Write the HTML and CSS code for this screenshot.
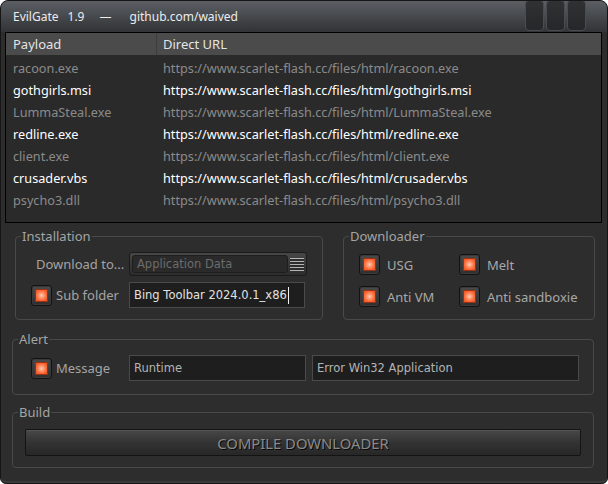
FILE: index.html
```html
<!DOCTYPE html>
<html>
<head>
<meta charset="utf-8">
<link rel="stylesheet" href="styles.css">
</head>
<body>
<div class="window">
  <div class="titlebar">
    <div class="title"><span>EvilGate</span><span class="ver">1.9</span><span class="dash">—</span><span class="link">github.com/waived</span></div>
    <div class="tbtns"><span class="tbtn"></span><span class="tbtn"></span><span class="tbtn"></span></div>
  </div>
  <div class="client">
    <div class="list">
      <div class="lhead"><div class="c1">Payload</div><div class="c2">Direct URL</div></div>
      <div class="rows">
        <div class="row"><div class="c1">racoon.exe</div><div class="c2">https://www.scarlet-flash.cc/files/html/racoon.exe</div></div>
        <div class="row hi"><div class="c1">gothgirls.msi</div><div class="c2">https://www.scarlet-flash.cc/files/html/gothgirls.msi</div></div>
        <div class="row"><div class="c1">LummaSteal.exe</div><div class="c2">https://www.scarlet-flash.cc/files/html/LummaSteal.exe</div></div>
        <div class="row hi"><div class="c1">redline.exe</div><div class="c2">https://www.scarlet-flash.cc/files/html/redline.exe</div></div>
        <div class="row"><div class="c1">client.exe</div><div class="c2">https://www.scarlet-flash.cc/files/html/client.exe</div></div>
        <div class="row hi"><div class="c1">crusader.vbs</div><div class="c2">https://www.scarlet-flash.cc/files/html/crusader.vbs</div></div>
        <div class="row"><div class="c1">psycho3.dll</div><div class="c2">https://www.scarlet-flash.cc/files/html/psycho3.dll</div></div>
      </div>
    </div>

    <div class="grouprow">
      <fieldset class="group install">
        <legend>Installation</legend>
        <div class="ginner install-inner">
          <div class="frow">
            <span class="lbl dl">Download to...</span>
            <div class="combo"><span class="val">Application Data</span><span class="grip"></span></div>
          </div>
          <div class="frow">
            <span class="check sub"><span class="dot"></span></span>
            <span class="lbl sublbl">Sub folder</span>
            <div class="tb tb-sub">Bing Toolbar 2024.0.1_x86<span class="caret"></span></div>
          </div>
        </div>
      </fieldset>
      <fieldset class="group downloader">
        <legend>Downloader</legend>
        <div class="ginner dl-inner">
          <div class="opt"><span class="check"><span class="dot"></span></span><span class="lbl">USG</span></div>
          <div class="opt"><span class="check"><span class="dot"></span></span><span class="lbl">Melt</span></div>
          <div class="opt"><span class="check"><span class="dot"></span></span><span class="lbl">Anti VM</span></div>
          <div class="opt"><span class="check"><span class="dot"></span></span><span class="lbl">Anti sandboxie</span></div>
        </div>
      </fieldset>
    </div>

    <fieldset class="group wide alert">
      <legend>Alert</legend>
      <div class="ginner alert-inner">
        <span class="check msg"><span class="dot"></span></span>
        <span class="lbl msglbl">Message</span>
        <div class="tb tb-title">Runtime</div>
        <div class="tb tb-text">Error Win32 Application</div>
      </div>
    </fieldset>

    <fieldset class="group wide build">
      <legend>Build</legend>
      <div class="ginner build-inner">
        <button class="btn">COMPILE DOWNLOADER</button>
      </div>
    </fieldset>
  </div>
</div>
</body>
</html>
```

FILE: styles.css
```css
body {
  margin: 0;
  background: #ffffff;
  font-family: "Noto Sans", "Open Sans", sans-serif;
  font-size: 13px;
}

.window {
  width: 608px;
  height: 484px;
  box-sizing: border-box;
  border: 1px solid #161616;
  border-radius: 8px 8px 6px 6px;
  background: #2d2d2d;
  overflow: hidden;
  display: flex;
  flex-direction: column;
  box-shadow: inset 0 -2px 0 #3a3a3a;
}

.titlebar {
  height: 31px;
  flex: none;
  display: flex;
  background: linear-gradient(#5b5e62, #4a4d51 40%, #313336);
}

.title {
  padding-left: 12px;
  line-height: 31px;
  font-size: 12px;
  color: #ececec;
  display: flex;
}
.title .ver { margin-left: 9px; }
.title .dash { margin-left: 15px; }
.title .link { margin-left: 18px; }

.tbtns {
  margin-left: auto;
  margin-right: 21px;
  display: flex;
  gap: 2px;
}
.tbtn {
  width: 19px;
  height: 31px;
  margin-top: -1px;
  box-sizing: border-box;
  border: 1px solid #4a4c50;
  border-radius: 4px;
  background: linear-gradient(#303133, #262729);
}

.client {
  flex: 1;
  padding: 0 5px 0 4px;
  display: flex;
  flex-direction: column;
}

.list {
  height: 191px;
  flex: none;
  box-sizing: border-box;
  border: 1px solid #000;
  background: #2a2a2a;
}
.lhead {
  display: flex;
  height: 22px;
  line-height: 22px;
  background: #4b4b4b;
  color: #e4e4e4;
}
.c1 {
  width: 151px;
  flex: none;
  box-sizing: border-box;
  padding-left: 7px;
}
.lhead .c1 { border-right: 1px solid #3c3c3c; }
.c2 { padding-left: 6px; white-space: nowrap; }
.rows { padding-top: 2px; font-size: 12.7px; }
.row {
  display: flex;
  height: 22px;
  line-height: 22px;
  color: #8a8a8a;
}
.row.hi { color: #ffffff; }

.grouprow {
  display: flex;
  margin-top: 5px;
}

.group {
  margin: 0;
  padding: 0;
  border: 1px solid #494949;
  border-radius: 4px;
  min-width: 0;
  box-sizing: border-box;
}
.group legend {
  margin-left: 5px;
  padding: 0 1px;
  color: #a4a4a4;
  font-size: 13px;
  line-height: 16px;
}

.install { width: 308px; margin-left: 10px; }
.downloader { width: 252px; margin-left: 20px; }
.wide { width: 582px; margin-left: 7px; }
.alert { margin-top: 11px; }
.build { margin-top: 9px; }

.lbl { color: #a4a4a4; white-space: nowrap; }

.install-inner {
  padding: 8px 0 11px 0;
  display: flex;
  flex-direction: column;
  gap: 6px;
}
.frow { display: flex; align-items: center; }
.frow .dl { width: 93px; margin-left: 20px; }
.check.sub { margin-left: 15px; }
.sublbl { width: 73px; margin-left: 4px; }

.check {
  width: 21px;
  height: 21px;
  flex: none;
  box-sizing: border-box;
  border: 1px solid #121212;
  border-radius: 3px;
  background: linear-gradient(#4a4a4a, #2e2e2e);
  box-shadow: inset 0 0 0 1px #3a3a3a;
  display: flex;
  align-items: center;
  justify-content: center;
}
.dot {
  width: 13px;
  height: 13px;
  box-sizing: border-box;
  border: 1px solid #9a3014;
  background: radial-gradient(circle, #ffd0b8 0%, #ff9a74 30%, #f9622e 70%, #ee5222 100%);
}

.combo {
  width: 178px;
  height: 24px;
  box-sizing: border-box;
  border: 1px solid #1b1b1b;
  border-radius: 3px;
  background: linear-gradient(#474747, #2c2c2c);
  display: flex;
  align-items: center;
  padding: 2px;
  gap: 2px;
}
.combo .val {
  flex: 1;
  height: 18px;
  box-sizing: border-box;
  background: #2a2a2a;
  border: 1px solid #1e1e1e;
  border-radius: 3px;
  color: #6c6c6c;
  font-family: "DejaVu Sans", sans-serif;
  font-size: 11.5px;
  line-height: 16px;
  padding-left: 4px;
}
.combo .grip {
  width: 14px;
  height: 13px;
  background: repeating-linear-gradient(#b4b4b4 0 1px, #2e2e2e 1px 3px);
}

.tb {
  height: 26px;
  box-sizing: border-box;
  background: #1e1e1e;
  border: 1px solid #4a4a4a;
  color: #b4b4b4;
  font-family: "DejaVu Sans", sans-serif;
  font-size: 11.5px;
  line-height: 24px;
  padding-left: 4px;
  white-space: nowrap;
  display: flex;
  align-items: center;
}
.tb-sub { width: 176px; color: #e2e2e2; }
.caret {
  width: 1px;
  height: 17px;
  background: #f0f0f0;
  margin-left: 1px;
}

.dl-inner {
  padding: 10px 0 12px 15px;
  display: grid;
  grid-template-columns: 100px 1fr;
  row-gap: 11px;
}
.opt { display: flex; align-items: center; gap: 7px; }
.opt .lbl { color: #a8a8a8; }

.alert-inner {
  padding: 8px 14px 13px 18px;
  display: flex;
  align-items: center;
}
.msglbl { width: 73px; margin-left: 4px; }
.tb-title { width: 177px; }
.tb-text { width: 267px; margin-left: 6px; }

.build-inner {
  padding: 9px 12px 11px 12px;
}
.btn {
  display: block;
  width: 100%;
  height: 27px;
  box-sizing: border-box;
  border: 1px solid #141414;
  border-radius: 2px;
  background: linear-gradient(#484848, #333333 50%, #272727);
  box-shadow: inset 0 1px 0 #555555;
  color: #8a8a8a;
  font-family: "Noto Sans", sans-serif;
  font-size: 14.8px;
  text-shadow: 1px 1px 0 #0a0a0a;
  padding: 0;
}
```
